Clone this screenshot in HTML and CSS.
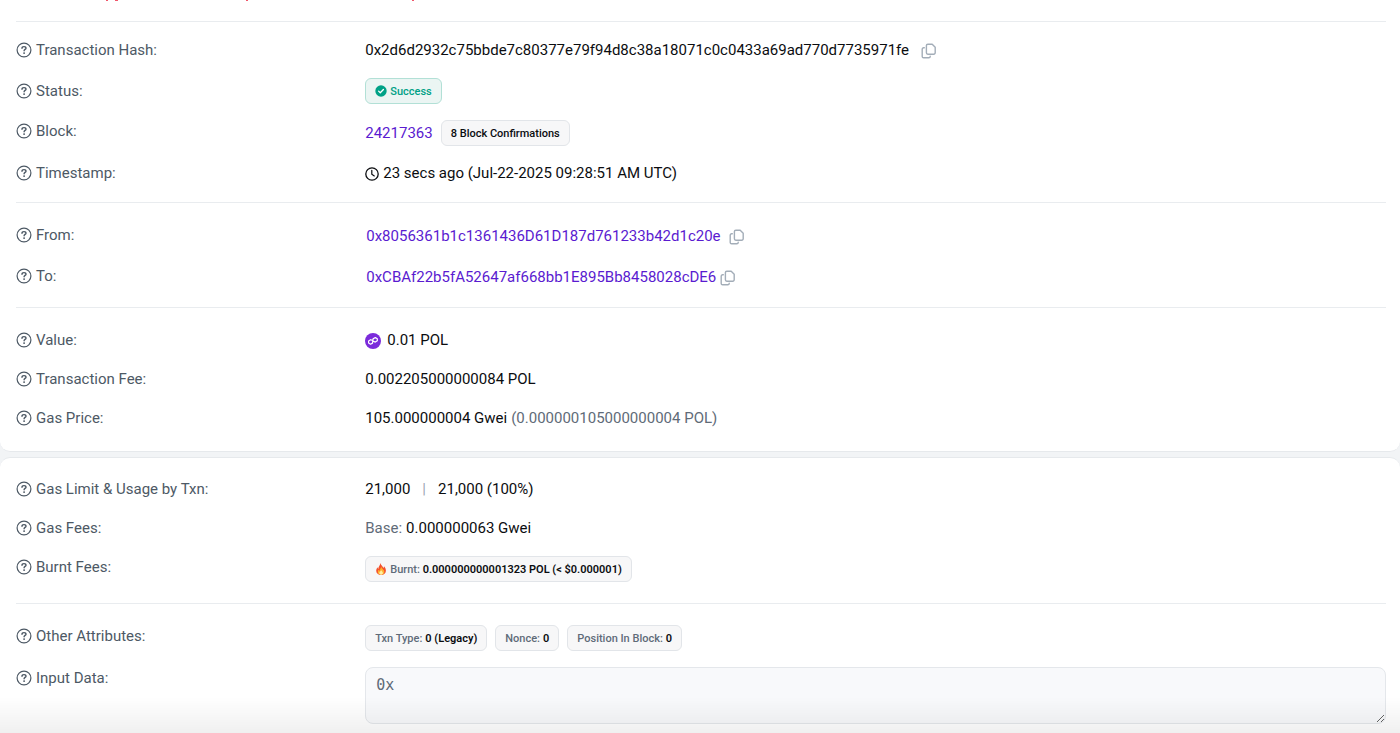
FILE: index.html
```
<!DOCTYPE html>
<html lang="en">
<head>
    <meta charset="UTF-8">
    <meta name="viewport" content="width=device-width, initial-scale=1.0">
    <title>Transaction Details</title>
    <link rel="stylesheet" href="styles.css">
</head>
<body>

    <svg class="sprite" aria-hidden="true">
        <symbol id="help" viewBox="0 0 16 16">
            <circle cx="8" cy="8" r="6.9" fill="none" stroke="currentColor" stroke-width="1.2"/>
            <path d="M6 6.2c0-1 .7-1.600 2-1.600s2 .7 2 1.600c0 1.200-1.900 1.300-1.900 2.500" fill="none" stroke="currentColor" stroke-width="1.400" stroke-linecap="round"/>
            <circle cx="8.1" cy="11.100" r=".95" fill="currentColor"/>
        </symbol>
        <symbol id="copy" viewBox="0 0 16 16">
            <path d="M6.800 1.200h4.400l3 3v5.600a1.400 1.400 0 0 1-1.400 1.400h-6a1.400 1.400 0 0 1-1.400-1.400V2.600a1.400 1.400 0 0 1 1.400-1.400z" fill="none" stroke="currentColor" stroke-width="1.400" stroke-linejoin="round"/>
            <path d="M3.300 4.800H2.600a1.400 1.400 0 0 0-1.400 1.400v7.200a1.400 1.400 0 0 0 1.400 1.400h5.200a1.400 1.400 0 0 0 1.400-1.400v-.2" fill="none" stroke="currentColor" stroke-width="1.400" stroke-linecap="round"/>
        </symbol>
    </svg>

    <main>
        <section class="card card-top">
            <svg class="notice" width="420" height="1" aria-hidden="true">
                <path d="M106 0h2v1h-2zM115 0h3v1h-3zM246 0h2v1h-2zM412 0h2v1h-2z" fill="#f0566b"/>
            </svg>
            <div class="group">
                <div class="row">
                    <div class="label"><svg class="icon"><use href="#help"/></svg>Transaction Hash:</div>
                    <div class="value hash">
                        <span>0x2d6d2932c75bbde7c80377e79f94d8c38a18071c0c0433a69ad770d7735971fe</span>
                        <button class="copy" aria-label="Copy transaction hash"><svg class="icon"><use href="#copy"/></svg></button>
                    </div>
                </div>
                <div class="row centered">
                    <div class="label"><svg class="icon"><use href="#help"/></svg>Status:</div>
                    <div class="value">
                        <span class="badge success">
                            <svg class="small-icon" viewBox="0 0 12 12"><circle cx="6" cy="6" r="5.7" fill="#00a186"/><path d="M3.6 6.1l1.7 1.6 3.1-3.2" fill="none" stroke="#fff" stroke-width="1.3" stroke-linecap="round" stroke-linejoin="round"/></svg>
                            Success
                        </span>
                    </div>
                </div>
                <div class="row">
                    <div class="label"><svg class="icon"><use href="#help"/></svg>Block:</div>
                    <div class="value">
                        <a href="#">24217363</a>
                        <span class="badge dark">8 Block Confirmations</span>
                    </div>
                </div>
                <div class="row">
                    <div class="label"><svg class="icon"><use href="#help"/></svg>Timestamp:</div>
                    <div class="value tight">
                        <svg class="clock" viewBox="0 0 14 14"><circle cx="7" cy="7" r="6.2" fill="none" stroke="currentColor" stroke-width="1.3"/><path d="M6.8 3.3v3.9l2.5 1.7" fill="none" stroke="currentColor" stroke-width="1.2" stroke-linecap="round"/></svg>
                        <span>23 secs ago (Jul-22-2025 09:28:51 AM UTC)</span>
                    </div>
                </div>
            </div>

            <div class="group">
                <div class="row">
                    <div class="label"><svg class="icon"><use href="#help"/></svg>From:</div>
                    <div class="value address">
                        <a href="#">0x8056361b1c1361436D61D187d761233b42d1c20e</a>
                        <button class="copy" aria-label="Copy sender address"><svg class="icon"><use href="#copy"/></svg></button>
                    </div>
                </div>
                <div class="row">
                    <div class="label"><svg class="icon"><use href="#help"/></svg>To:</div>
                    <div class="value address tight">
                        <a href="#">0xCBAf22b5fA52647af668bb1E895Bb8458028cDE6</a>
                        <button class="copy" aria-label="Copy recipient address"><svg class="icon"><use href="#copy"/></svg></button>
                    </div>
                </div>
            </div>

            <div class="group">
                <div class="row">
                    <div class="label"><svg class="icon"><use href="#help"/></svg>Value:</div>
                    <div class="value coin">
                        <svg class="icon" viewBox="0 0 16 16">
                            <circle cx="8" cy="8" r="8" fill="#7b2bdb"/>
                            <g fill="none" stroke="#fff" stroke-width="1.2" stroke-linejoin="round">
                                <path d="M7.7 7.4L5.6 6.7 3.6 8v2.1l1.9 1.1 2-1.1.6-4.3 2.2-1.2 2 1.1v2.1l-2 1.3-2-.8"/>
                            </g>
                        </svg>
                        <span>0.01 POL</span>
                    </div>
                </div>
                <div class="row">
                    <div class="label"><svg class="icon"><use href="#help"/></svg>Transaction Fee:</div>
                    <div class="value">0.002205000000084 POL</div>
                </div>
                <div class="row">
                    <div class="label"><svg class="icon"><use href="#help"/></svg>Gas Price:</div>
                    <div class="value tight">105.000000004 Gwei <span class="muted">(0.000000105000000004 POL)</span></div>
                </div>
            </div>
        </section>

        <section class="card card-bottom">
            <div class="group">
                <div class="row">
                    <div class="label"><svg class="icon"><use href="#help"/></svg>Gas Limit &amp; Usage by Txn:</div>
                    <div class="value usage"><span>21,000</span><span class="divider">|</span><span>21,000 (100%)</span></div>
                </div>
                <div class="row">
                    <div class="label"><svg class="icon"><use href="#help"/></svg>Gas Fees:</div>
                    <div class="value tight"><span class="muted">Base:</span> 0.000000063 Gwei</div>
                </div>
                <div class="row">
                    <div class="label"><svg class="icon"><use href="#help"/></svg>Burnt Fees:</div>
                    <div class="value">
                        <span class="badge">
                            <svg class="small-icon" viewBox="0 0 12 12">
                                <path d="M5.2 0c.4 2 2.6 3 3.2 5 .4-.5.6-1 .6-1.7 1.2 1.3 1.9 2.8 1.9 4.4C10.9 10.3 8.9 12 6.1 12S1.2 10.3 1.2 7.7c0-1.5.7-2.6 1.5-3.5 0 .8.2 1.3.6 1.700C3.300 3.600 5.300 2.500 5.200 0z" fill="#f4512c"/>
                                <path d="M6.200 3.600c.2 1.900 3.100 3 3.100 5.400 0 1.800-1.400 2.800-3.200 2.800s-3.300-1-3.300-2.800c0-1 .4-1.800 1-2.500.1.800.4 1.200.8 1.400 0-1.600 1.500-2.600 1.600-4.300z" fill="#ffb02e"/>
                                <path d="M6.200 7c.1 1 1.700 1.700 1.700 3 0 1.100-.8 1.700-1.800 1.700s-1.800-.6-1.800-1.600c0-1.200 1.700-1.900 1.900-3.100z" fill="#fff0a0"/>
                            </svg>
                            <span>Burnt: <b>0.000000000001323 POL (&lt; $0.000001)</b></span>
                        </span>
                    </div>
                </div>
            </div>

            <div class="group">
                <div class="row">
                    <div class="label"><svg class="icon"><use href="#help"/></svg>Other Attributes:</div>
                    <div class="value">
                        <span class="badge">Txn Type: <b>0 (Legacy)</b></span>
                        <span class="badge">Nonce: <b>0</b></span>
                        <span class="badge">Position In Block: <b>0</b></span>
                    </div>
                </div>
                <div class="row">
                    <label class="label" for="inputData"><svg class="icon"><use href="#help"/></svg>Input Data:</label>
                    <textarea id="inputData" rows="2" readonly>0x</textarea>
                </div>
            </div>
        </section>
    </main>

</body>
</html>
```
FILE: styles.css
```
* {
    box-sizing: border-box;
}
body {
    font-family: Roboto, Arial, sans-serif;
    font-size: 15px;
    line-height: 23px;
    color: #0b0d10;
    background: #f2f4f6;
    margin: 0;
}
/* soft shade along the bottom of the window */
body::after {
    content: '';
    position: fixed;
    left: 0;
    right: 0;
    bottom: 0;
    height: 36px;
    background: linear-gradient(rgba(0, 0, 0, 0), rgba(0, 0, 0, 0.06));
    pointer-events: none;
}
main {
    display: flex;
    flex-direction: column;
    gap: 5px;
}
.sprite {
    display: none;
}
.card {
    background: #fff;
    border: solid #e6e9ec;
    border-width: 1px 0;
    border-radius: 10px;
    padding: 0 14px 0 16px;
}
.card-top {
    border-top: none;
    border-top-left-radius: 0;
    border-top-right-radius: 0;
}
.card-bottom {
    border-bottom: none;
    border-bottom-left-radius: 0;
    border-bottom-right-radius: 0;
}
.notice {
    display: block;
    margin: 0 0 20px -16px;
}
.group {
    display: flex;
    flex-direction: column;
    gap: 16px;
    padding: 21px 0 17px;
    border-top: 1px solid #e9ecef;
}
.card-top .group:nth-of-type(1) {
    padding-top: 17px;
}
.card-top .group:last-child {
    padding-bottom: 21px;
}
.card-bottom .group:first-child {
    padding: 20px 0 21px;
    border-top: none;
}
.card-bottom .group:last-child {
    padding-bottom: 12px;
}
.row {
    display: grid;
    grid-template-columns: 1fr 3fr;
    column-gap: 9px;
    align-items: start;
}
.row.centered {
    align-items: center;
}
.label {
    display: flex;
    align-items: flex-start;
    gap: 4px;
    color: #4d5965;
}
.label .icon {
    margin-top: 3px;
}
.value {
    display: flex;
    align-items: center;
    gap: 8px;
    min-width: 0;
}
.value.hash {
    gap: 12px;
}
.value.tight {
    gap: 4px;
}
.value.coin {
    gap: 6px;
}
.value.usage {
    gap: 12px;
}
.address {
    min-height: 25px;
    padding-left: 1px;
}
.icon {
    width: 16px;
    height: 16px;
    flex: none;
}
.small-icon {
    width: 12px;
    height: 12px;
}
.clock {
    width: 14px;
    height: 14px;
}
a {
    color: #5a1bd0;
    text-decoration: none;
}
.muted {
    color: #5f6b78;
}
.divider {
    color: #9aa6b2;
}
.copy {
    display: flex;
    padding: 0;
    border: none;
    background: none;
    color: #a3adb8;
    cursor: pointer;
}
.badge {
    display: inline-flex;
    align-items: center;
    gap: 3px;
    height: 26px;
    padding: 0 9px;
    border: 1px solid #e2e5e9;
    border-radius: 6px;
    background: #f7f7f8;
    color: #5f6b78;
    font-size: 11px;
    font-weight: 500;
    white-space: nowrap;
}
.badge b {
    color: #0b0d10;
    font-weight: 600;
}
.badge.dark {
    color: #0b0d10;
}
.badge.success {
    border-color: #b2e0d6;
    background: #ebf5f3;
    color: #00a186;
}
textarea {
    width: 100%;
    height: 57px;
    padding: 6px 10px;
    border: 1px solid #e4e7eb;
    border-radius: 8px;
    background: #f8f9fb;
    color: #5f6b78;
    font-family: "DejaVu Sans Mono", "Liberation Mono", monospace;
    font-size: 15px;
    line-height: 23px;
    resize: vertical;
}
```
